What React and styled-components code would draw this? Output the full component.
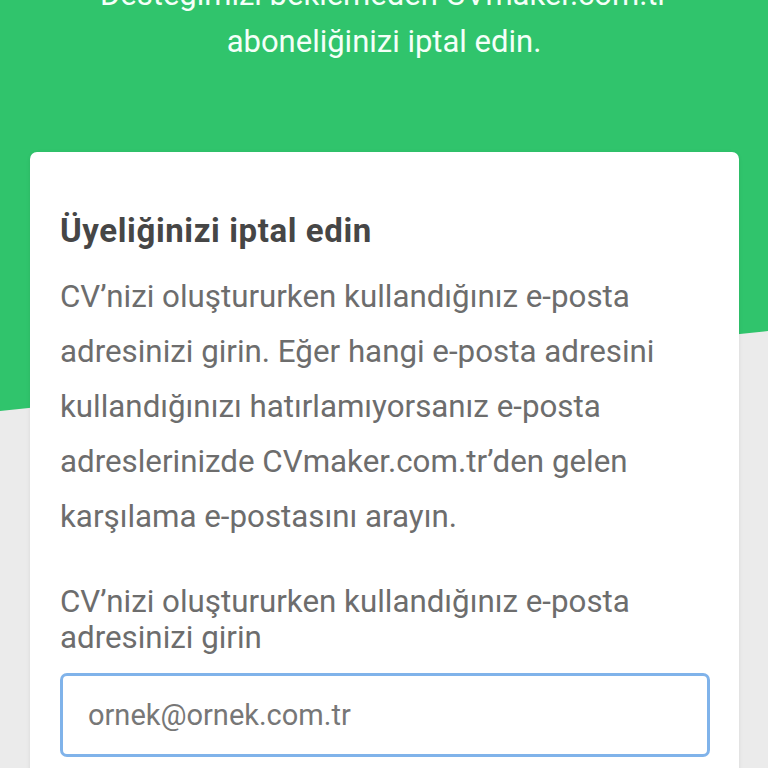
import React from "react";
import styled, { createGlobalStyle } from "styled-components";

const Global = createGlobalStyle`
  html, body { margin: 0; padding: 0; background: #ebebeb; }
  body { font-family: Roboto, "Noto Sans", "Liberation Sans", sans-serif; }
  * { box-sizing: border-box; }
`;

const Page = styled.div`
  position: relative;
  min-height: 768px;
  overflow: hidden;
  &::before {
    content: "";
    position: absolute;
    left: 0; top: 0; right: 0;
    height: 411px;
    background: #30c46c;
    clip-path: polygon(0 0, 100% 0, 100% 331px, 0 411px);
  }
`;

const Content = styled.div`
  position: relative;
  display: flex;
  flex-direction: column;
  margin-top: -29px;
`;

const Lead = styled.p`
  margin: 0 40px;
  text-align: center;
  color: #f4fff8;
  font-size: 31px;
  line-height: 47px;
`;

const Card = styled.section`
  margin: 87px 29px 0 30px;
  background: #fff;
  border-radius: 7px;
  box-shadow: 0 1px 4px rgba(0,0,0,0.08);
  padding: 59px 29px 40px 30px;
  display: flex;
  flex-direction: column;
`;

const Title = styled.h2`
  margin: 0;
  font-size: 33px;
  font-weight: 700;
  letter-spacing: 0.6px;
  line-height: 40px;
  color: #464646;
`;

const Body = styled.p`
  margin: 18px 0 0;
  font-size: 31.3px;
  line-height: 55px;
  color: #6d6d6d;
`;

const Label = styled.label`
  margin-top: 40px;
  font-size: 31.3px;
  line-height: 36px;
  color: #6d6d6d;
`;

const Input = styled.input`
  margin-top: 17px;
  width: 100%;
  height: 84px;
  border: 3px solid #80b3ea;
  border-radius: 7px;
  padding: 0 25px;
  font-family: inherit;
  font-size: 29px;
  color: #444;
  outline: none;
  &::placeholder { color: #777; }
`;

export default function App() {
  return (
    <>
      <Global />
      <Page>
        <Content>
          <Lead>
            Desteğimizi beklemeden CVmaker.com.tr aboneliğinizi iptal edin.
          </Lead>
          <Card>
            <Title>Üyeliğinizi iptal edin</Title>
            <Body>
              CV’nizi oluştururken kullandığınız e-posta adresinizi girin. Eğer
              hangi e-posta adresini kullandığınızı hatırlamıyorsanız e-posta
              adreslerinizde CVmaker.com.tr’den gelen karşılama e-postasını
              arayın.
            </Body>
            <Label htmlFor="email">
              CV’nizi oluştururken kullandığınız e-posta adresinizi girin
            </Label>
            <Input id="email" type="email" placeholder="ornek@ornek.com.tr" autoFocus />
          </Card>
        </Content>
      </Page>
    </>
  );
}
